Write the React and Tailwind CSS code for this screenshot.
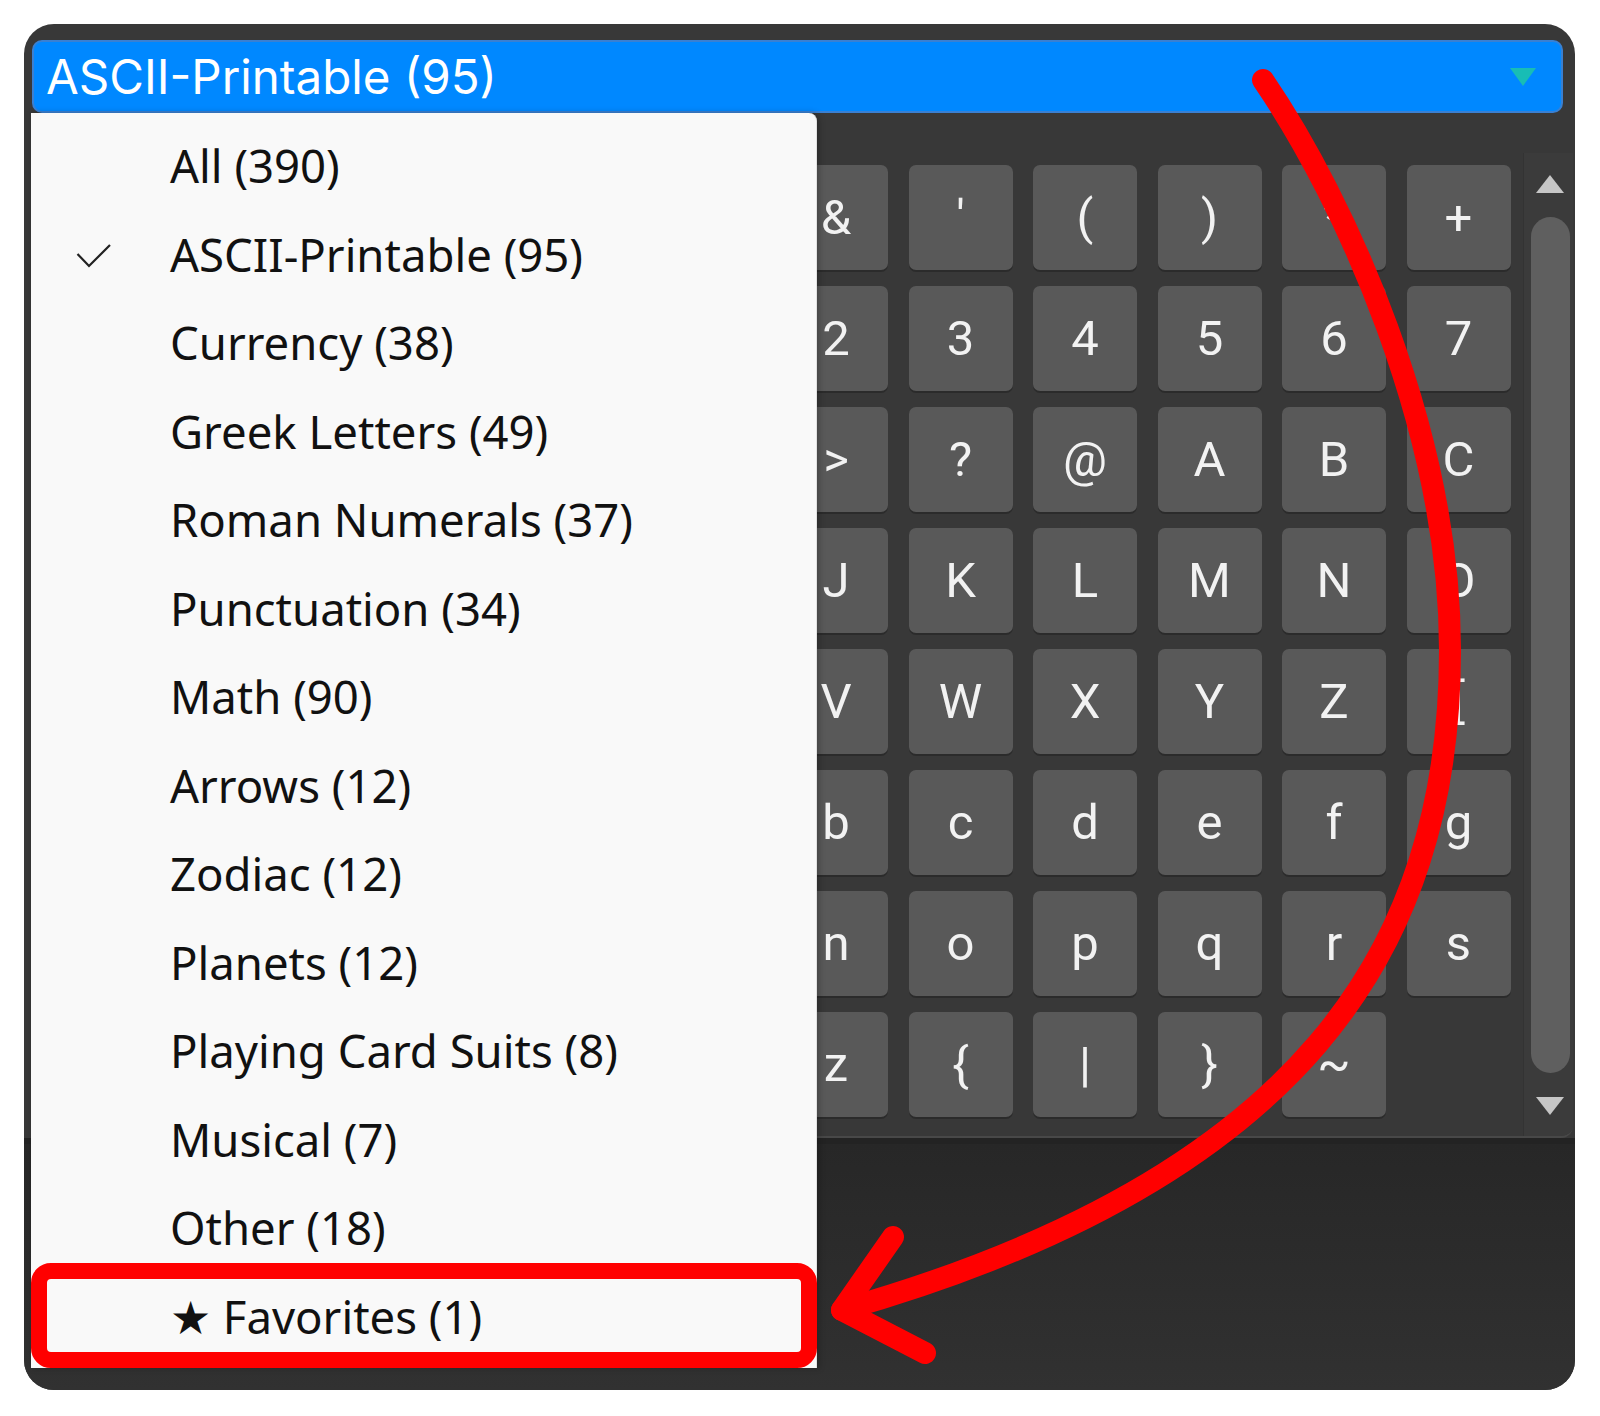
import React from "react";

const categories = [
  "All (390)",
  "ASCII-Printable (95)",
  "Currency (38)",
  "Greek Letters (49)",
  "Roman Numerals (37)",
  "Punctuation (34)",
  "Math (90)",
  "Arrows (12)",
  "Zodiac (12)",
  "Planets (12)",
  "Playing Card Suits (8)",
  "Musical (7)",
  "Other (18)",
  "★ Favorites (1)",
];

// ASCII 32..126, 12 per row (left half sits behind the open menu)
const chars = Array.from({ length: 95 }, (_, i) => String.fromCharCode(32 + i));

const Key = ({ ch }) => (
  <div className="h-[105px] rounded-[7px] bg-[#595959] shadow-[0_2px_0_#2b2b2b] flex items-center justify-center text-[49px] leading-none text-[#f2f2f2] font-['Roboto',sans-serif]">
    {ch}
  </div>
);

const CategoryMenu = ({ selected }) => (
  <div className="absolute left-[7px] top-[89px] w-[786px] h-[1255px] bg-[#f9f9f9] rounded-tr-[8px] border-r border-[#e2e2e2] shadow-[2px_0_6px_rgba(0,0,0,0.25)] pt-[8px]">
    {categories.map((c) => (
      <div
        key={c}
        className="relative h-[88.5px] flex items-center pl-[139px] text-[45.5px] text-[#111] font-['Noto_Sans',sans-serif]"
      >
        {c === selected && (
          <svg className="absolute left-[45px] top-[33px]" width="36" height="26" viewBox="0 0 36 26">
            <polyline points="1.5,11 13,23 34,2" fill="none" stroke="#222" strokeWidth="2.2" />
          </svg>
        )}
        {c}
      </div>
    ))}
  </div>
);

export default function App() {
  const selected = "ASCII-Printable (95)";
  return (
    <div className="relative w-[1600px] h-[1416px] bg-white pt-[24px] pl-[24px] overflow-hidden">
      <div className="relative w-[1551px] h-[1366px] bg-[#383838] rounded-[30px] overflow-hidden flex flex-col">
        {/* selector bar */}
        <div className="pt-[16px] pl-[8px] pr-[12px]">
          <div className="h-[73px] rounded-[10px] bg-[#0088ff] border-2 border-[#3a80d2] flex items-center justify-between pl-[12px] pr-[25px]">
            <span className="text-[47.5px] leading-none text-white font-['Inter',sans-serif]">{selected}</span>
            <svg width="26" height="18" viewBox="0 0 26 18">
              <polygon points="0,0 26,0 13,18" fill="#18bdb5" />
            </svg>
          </div>
        </div>

        {/* character grid */}
        <div className="mt-[40px] ml-[8px] mr-[2px] h-[985px] flex border-b-2 border-[#484848] rounded-br-[12px] overflow-hidden">
          <div className="flex-1 pl-[5px] pt-[12px] overflow-hidden">
            <div className="grid grid-cols-[repeat(12,104px)] gap-x-[20.5px] gap-y-[16px]">
              {chars.map((ch, i) => (
                <Key key={i} ch={ch} />
              ))}
            </div>
          </div>
          <div className="w-[50px] bg-[#3b3b3b] border-l border-[#333] flex flex-col items-center pl-[6px] pr-[3px] pt-[22px]">
            <svg width="28" height="18" viewBox="0 0 28 18">
              <polygon points="14,0 28,18 0,18" fill="#c6c6c6" />
            </svg>
            <div className="mt-[24px] w-[39px] h-[856px] rounded-full bg-[#5f5f5f]" />
            <svg className="mt-[24px]" width="28" height="18" viewBox="0 0 28 18">
              <polygon points="0,0 28,0 14,18" fill="#c6c6c6" />
            </svg>
          </div>
        </div>

        {/* lower panel */}
        <div className="flex-1 border-t-[6px] border-[#232323] bg-linear-to-b from-[#272727] to-[#313131]" />

        <CategoryMenu selected={selected} />
      </div>

      {/* annotation: highlight box */}
      <div className="absolute left-[31px] top-[1263px] w-[786px] h-[105px] border-[16px] border-[#ff0000] rounded-[20px]" />

      {/* annotation: arrow */}
      <svg className="absolute left-0 top-0 pointer-events-none" width="1600" height="1416" viewBox="0 0 1600 1416">
        <path
          d="M 1263 80 C 1345 200 1450 430 1450 650 C 1450 950 1300 1180 842 1310"
          fill="none"
          stroke="#ff0000"
          strokeWidth="22"
          strokeLinecap="round"
        />
        <path
          d="M 893 1237 L 842 1310 L 925 1353"
          fill="none"
          stroke="#ff0000"
          strokeWidth="22"
          strokeLinecap="round"
          strokeLinejoin="round"
        />
      </svg>
    </div>
  );
}
